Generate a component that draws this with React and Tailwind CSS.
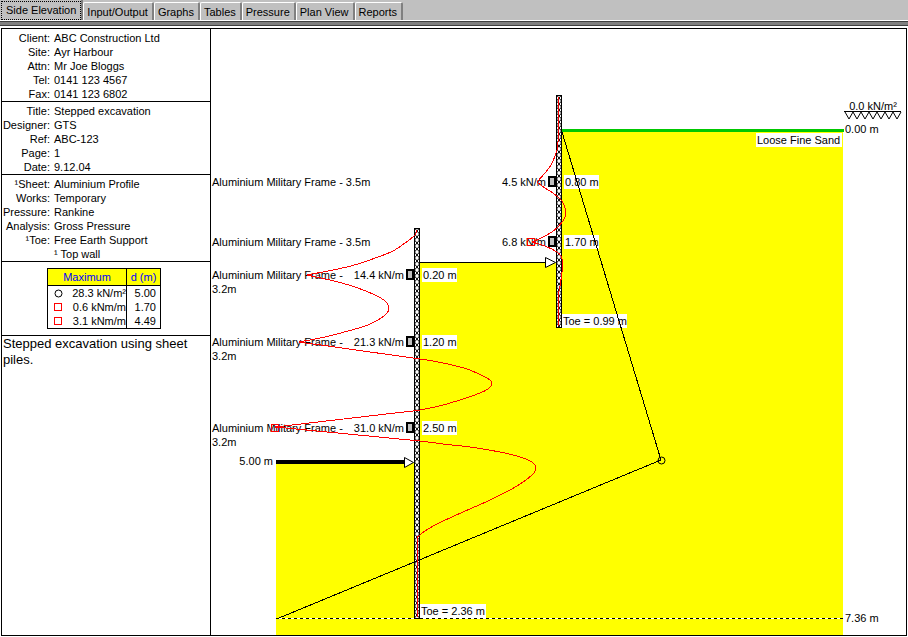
import React from 'react';

const TABS = ['Input/Output', 'Graphs', 'Tables', 'Pressure', 'Plan View', 'Reports'];

const DETAILS = [
  [
    ['Client:', 'ABC Construction Ltd'],
    ['Site:', 'Ayr Harbour'],
    ['Attn:', 'Mr Joe Bloggs'],
    ['Tel:', '0141 123 4567'],
    ['Fax:', '0141 123 6802'],
  ],
  [
    ['Title:', 'Stepped excavation'],
    ['Designer:', 'GTS'],
    ['Ref:', 'ABC-123'],
    ['Page:', '1'],
    ['Date:', '9.12.04'],
  ],
  [
    ['¹Sheet:', 'Aluminium Profile'],
    ['Works:', 'Temporary'],
    ['Pressure:', 'Rankine'],
    ['Analysis:', 'Gross Pressure'],
    ['¹Toe:', 'Free Earth Support'],
    ['', '¹ Top wall'],
  ],
];

const MAXIMA = [
  { shape: 'circle', value: '28.3 kN/m²', depth: '5.00' },
  { shape: 'square', value: '0.6 kNm/m', depth: '1.70' },
  { shape: 'square', value: '3.1 kNm/m', depth: '4.49' },
];

const FRAME_LABELS = [
  { y: 186, text: 'Aluminium Military Frame - 3.5m' },
  { y: 246, text: 'Aluminium Military Frame - 3.5m' },
  { y: 279, text: 'Aluminium Military Frame -', second: '3.2m' },
  { y: 346, text: 'Aluminium Military Frame -', second: '3.2m' },
  { y: 432, text: 'Aluminium Military Frame -', second: '3.2m' },
];

// Frame positions, x is the left face of the pile
const FRAMES = [
  { x: 556, y: 182, load: '4.5 kN/m', depth: '0.80 m' },
  { x: 556, y: 242, load: '6.8 kN/m', depth: '1.70 m' },
  { x: 414, y: 275, load: '14.4 kN/m', depth: '0.20 m' },
  { x: 414, y: 342, load: '21.3 kN/m', depth: '1.20 m' },
  { x: 414, y: 428, load: '31.0 kN/m', depth: '2.50 m' },
];

// Bending moment curves, split at the frames where the slope breaks
const MOMENTS = [
  [[558.5, 97], [558.5, 130], [557.5, 148], [555, 156], [551, 165], [545, 173], [537, 182]],
  [[537, 182], [545, 188], [553, 193], [562, 201], [565, 208], [565, 217], [558, 227], [547, 235], [532, 242]],
  [[532, 242], [545, 246], [557, 252], [561, 256], [562.5, 262], [562.5, 268], [560.5, 283], [558.5, 295], [558.5, 326]],
  [[417, 230], [415, 235], [405, 243], [393, 251], [378, 257], [358, 264], [338, 269], [307, 275]],
  [[307, 275], [338, 282], [358, 288], [377, 296], [386, 302], [389, 309], [384, 316], [368, 325], [348, 331], [325, 337], [299, 342]],
  [[299, 342], [420, 359], [443, 363], [467, 369], [483, 376], [490, 380], [492, 384], [488, 389], [480, 393], [463, 399], [443, 405], [420, 410], [395, 413], [275, 427]],
  [[275, 427], [420, 441], [443, 444], [470, 447], [500, 452], [520, 457], [532, 462], [536, 468], [532, 475], [517, 486], [490, 500], [463, 512], [437, 524], [425, 531], [417.5, 537]],
  [[417.5, 537], [417.5, 617]],
];

const toPath = (pts) => {
  let d = `M${pts[0][0]} ${pts[0][1]}`;
  for (let i = 0; i < pts.length - 1; i++) {
    const a = pts[i - 1] || pts[i];
    const b = pts[i];
    const c = pts[i + 1];
    const e = pts[i + 2] || c;
    // shorter handle on uneven spacing so that long segments do not overshoot
    const len = (p, q) => Math.hypot(q[0] - p[0], q[1] - p[1]);
    const mid = len(b, c);
    const k1 = mid / (len(a, b) + mid) / 3;
    const k2 = mid / (len(c, e) + mid) / 3;
    d += ` C${b[0] + (c[0] - a[0]) * k1} ${b[1] + (c[1] - a[1]) * k1}`;
    d += ` ${c[0] - (e[0] - b[0]) * k2} ${c[1] - (e[1] - b[1]) * k2} ${c[0]} ${c[1]}`;
  }
  return d;
};

const TabBar = () => (
  <div
    role="tablist"
    className="flex h-5 items-end bg-[#c0c0c0] whitespace-nowrap"
  >
    <button
      role="tab"
      aria-selected="true"
      className="h-5 border-r-2 border-[#808080] pl-px"
    >
      <span className="block h-[19px] border border-dotted border-black px-1 leading-[17px]">
        Side Elevation
      </span>
    </button>
    {TABS.map((tab) => (
      <button
        key={tab}
        role="tab"
        aria-selected="false"
        className="h-[18px] rounded-t-xs border-t border-r-2 border-l border-t-white border-r-[#808080] border-l-white pr-1 pl-[3px] leading-[18px]"
      >
        {tab}
      </button>
    ))}
  </div>
);

const Marker = ({ shape }) => (
  <svg width="9" height="9" viewBox="0 0 9 9" fill="none" className="block">
    {shape === 'circle' ? (
      <circle cx="4.5" cy="4.5" r="3.5" stroke="#000" />
    ) : (
      <rect x="0.5" y="0.5" width="7" height="7" stroke="#f00" />
    )}
  </svg>
);

const Sidebar = () => (
  <aside className="w-[209px] shrink-0 border-r border-black">
    {DETAILS.map((rows, index) => (
      <dl key={index} className="border-b border-black pt-0.5 leading-[14px]">
        {rows.map(([label, value]) => (
          <div key={value} className="flex gap-1">
            <dt className="w-12 shrink-0 text-right whitespace-nowrap">{label}</dt>
            <dd>{value}</dd>
          </div>
        ))}
      </dl>
    ))}
    <div className="border-b border-black py-1.5 pl-[45px]">
      <table className="w-[114px] border-collapse border border-black leading-[14px]">
        <thead>
          <tr className="h-[17px] border-b border-black bg-[#ffff00] text-[#0000ff]">
            <th className="border-r border-black p-0 font-normal">Maximum</th>
            <th className="w-[34px] p-0 font-normal">d (m)</th>
          </tr>
        </thead>
        <tbody>
          {MAXIMA.map((row) => (
            <tr key={row.value}>
              <td className="border-r border-black p-0">
                <div className="flex items-center justify-between pl-1.5">
                  <Marker shape={row.shape} />
                  <span>{row.value}</span>
                </div>
              </td>
              <td className="p-0 pr-1 text-right">{row.depth}</td>
            </tr>
          ))}
        </tbody>
      </table>
    </div>
    <p className="pl-px text-[13px] leading-4">Stepped excavation using sheet piles.</p>
  </aside>
);

const Pile = ({ x, top, bottom }) => (
  <g transform={`translate(${x} ${top})`}>
    <rect width="6" height={bottom - top} fill="#fff" />
    <rect width="6" height={bottom - top} fill="url(#hatch)" />
    <rect x="0.5" y="0.5" width="5" height={bottom - top - 1} fill="none" stroke="#000" />
  </g>
);

const Tag = ({ x, y, width, children }) => (
  <g>
    <rect x={x} y={y - 7} width={width} height="14" fill="#fff" />
    <text x={x + 1} y={y + 4}>{children}</text>
  </g>
);

const Elevation = () => (
  <svg
    viewBox="211 29 695 606"
    role="img"
    aria-label="Side elevation"
    className="block h-auto w-full min-w-0 flex-1 text-[11px]"
  >
    <defs>
      <pattern id="hatch" width="6" height="6" patternUnits="userSpaceOnUse">
        <path d="M0.5 0L5.5 6M5.5 0L0.5 6" stroke="#000" />
      </pattern>
    </defs>

    {/* Ground */}
    <path d="M562 131H843V635H276V463H415V263H562Z" fill="#ff0" />
    <rect x="562" y="129" width="282" height="3" fill="#00c800" />
    <path d="M276 618.5H843" stroke="#fff" />
    <path d="M276 618.5H843" stroke="#000" strokeDasharray="3 3" />
    <path d="M419 262.5H546" stroke="#000" />
    <rect x="276" y="460" width="129" height="4" fill="#000" />

    <Pile x={414} top={228} bottom={619} />
    <Pile x={556} top={95} bottom={328} />

    <g fill="#fff" stroke="#000">
      <path d="M404.5 457.5V467.5L413.5 462.5Z" />
      <path d="M545.5 257.5V267.5L555.5 262.5Z" />
    </g>

    {/* Labels */}
    {FRAME_LABELS.map(({ y, text, second }) => (
      <text key={y} x="212" y={y}>
        {text}
        {second && <tspan x="212" dy="14">{second}</tspan>}
      </text>
    ))}
    {FRAMES.map(({ x, y, load, depth }) => (
      <g key={y}>
        <text x={x - 10} y={y + 4} textAnchor="end">{load}</text>
        <rect x={x - 7} y={y - 5} width="6" height="9" fill="#c0c0c0" stroke="#000" strokeWidth="2" />
        <Tag x={x + 8} y={y} width={35}>{depth}</Tag>
      </g>
    ))}
    <Tag x={562} y={321} width={65}>Toe = 0.99 m</Tag>
    <Tag x={420} y={611} width={66}>Toe = 2.36 m</Tag>
    <Tag x={756} y={140} width={86}>Loose Fine Sand</Tag>
    <text x="273" y="465" textAnchor="end">5.00 m</text>
    <text x="845" y="133">0.00 m</text>
    <text x="845" y="622">7.36 m</text>

    {/* Surcharge */}
    <text x="873" y="110" textAnchor="middle">0.0 kN/m²</text>
    <path
      d="M844 111.5H901M845 112L849 119L853 112L857 119L861 112L865 119L869 112L873 119L877 112L881 119L885 112L889 119L893 112L897 119L901 112"
      fill="none"
      stroke="#000"
    />

    {/* Pressure line */}
    <g fill="none" stroke="#000">
      <path d="M562 132L661 460L279 618" shapeRendering="crispEdges" />
      <circle cx="661.5" cy="460.5" r="3.5" />
    </g>

    {/* Moments */}
    <g fill="none" stroke="#f00" shapeRendering="crispEdges">
      {MOMENTS.map((pts, index) => (
        <path key={index} d={toPath(pts)} />
      ))}
      <rect x="271.5" y="424.5" width="7" height="7" />
      <rect x="527.5" y="238.5" width="7" height="7" />
    </g>
  </svg>
);

const App = () => (
  <div className="min-h-screen bg-white font-['Liberation_Sans',Arial,sans-serif] text-[11px] text-black">
    <TabBar />
    <div className="border-t border-white">
      <div className="h-[5px] border-y border-[#404040] bg-[#808080]" />
    </div>
    <main className="mx-px mt-0.5 flex border border-black">
      <Sidebar />
      <Elevation />
    </main>
  </div>
);

export default App;
